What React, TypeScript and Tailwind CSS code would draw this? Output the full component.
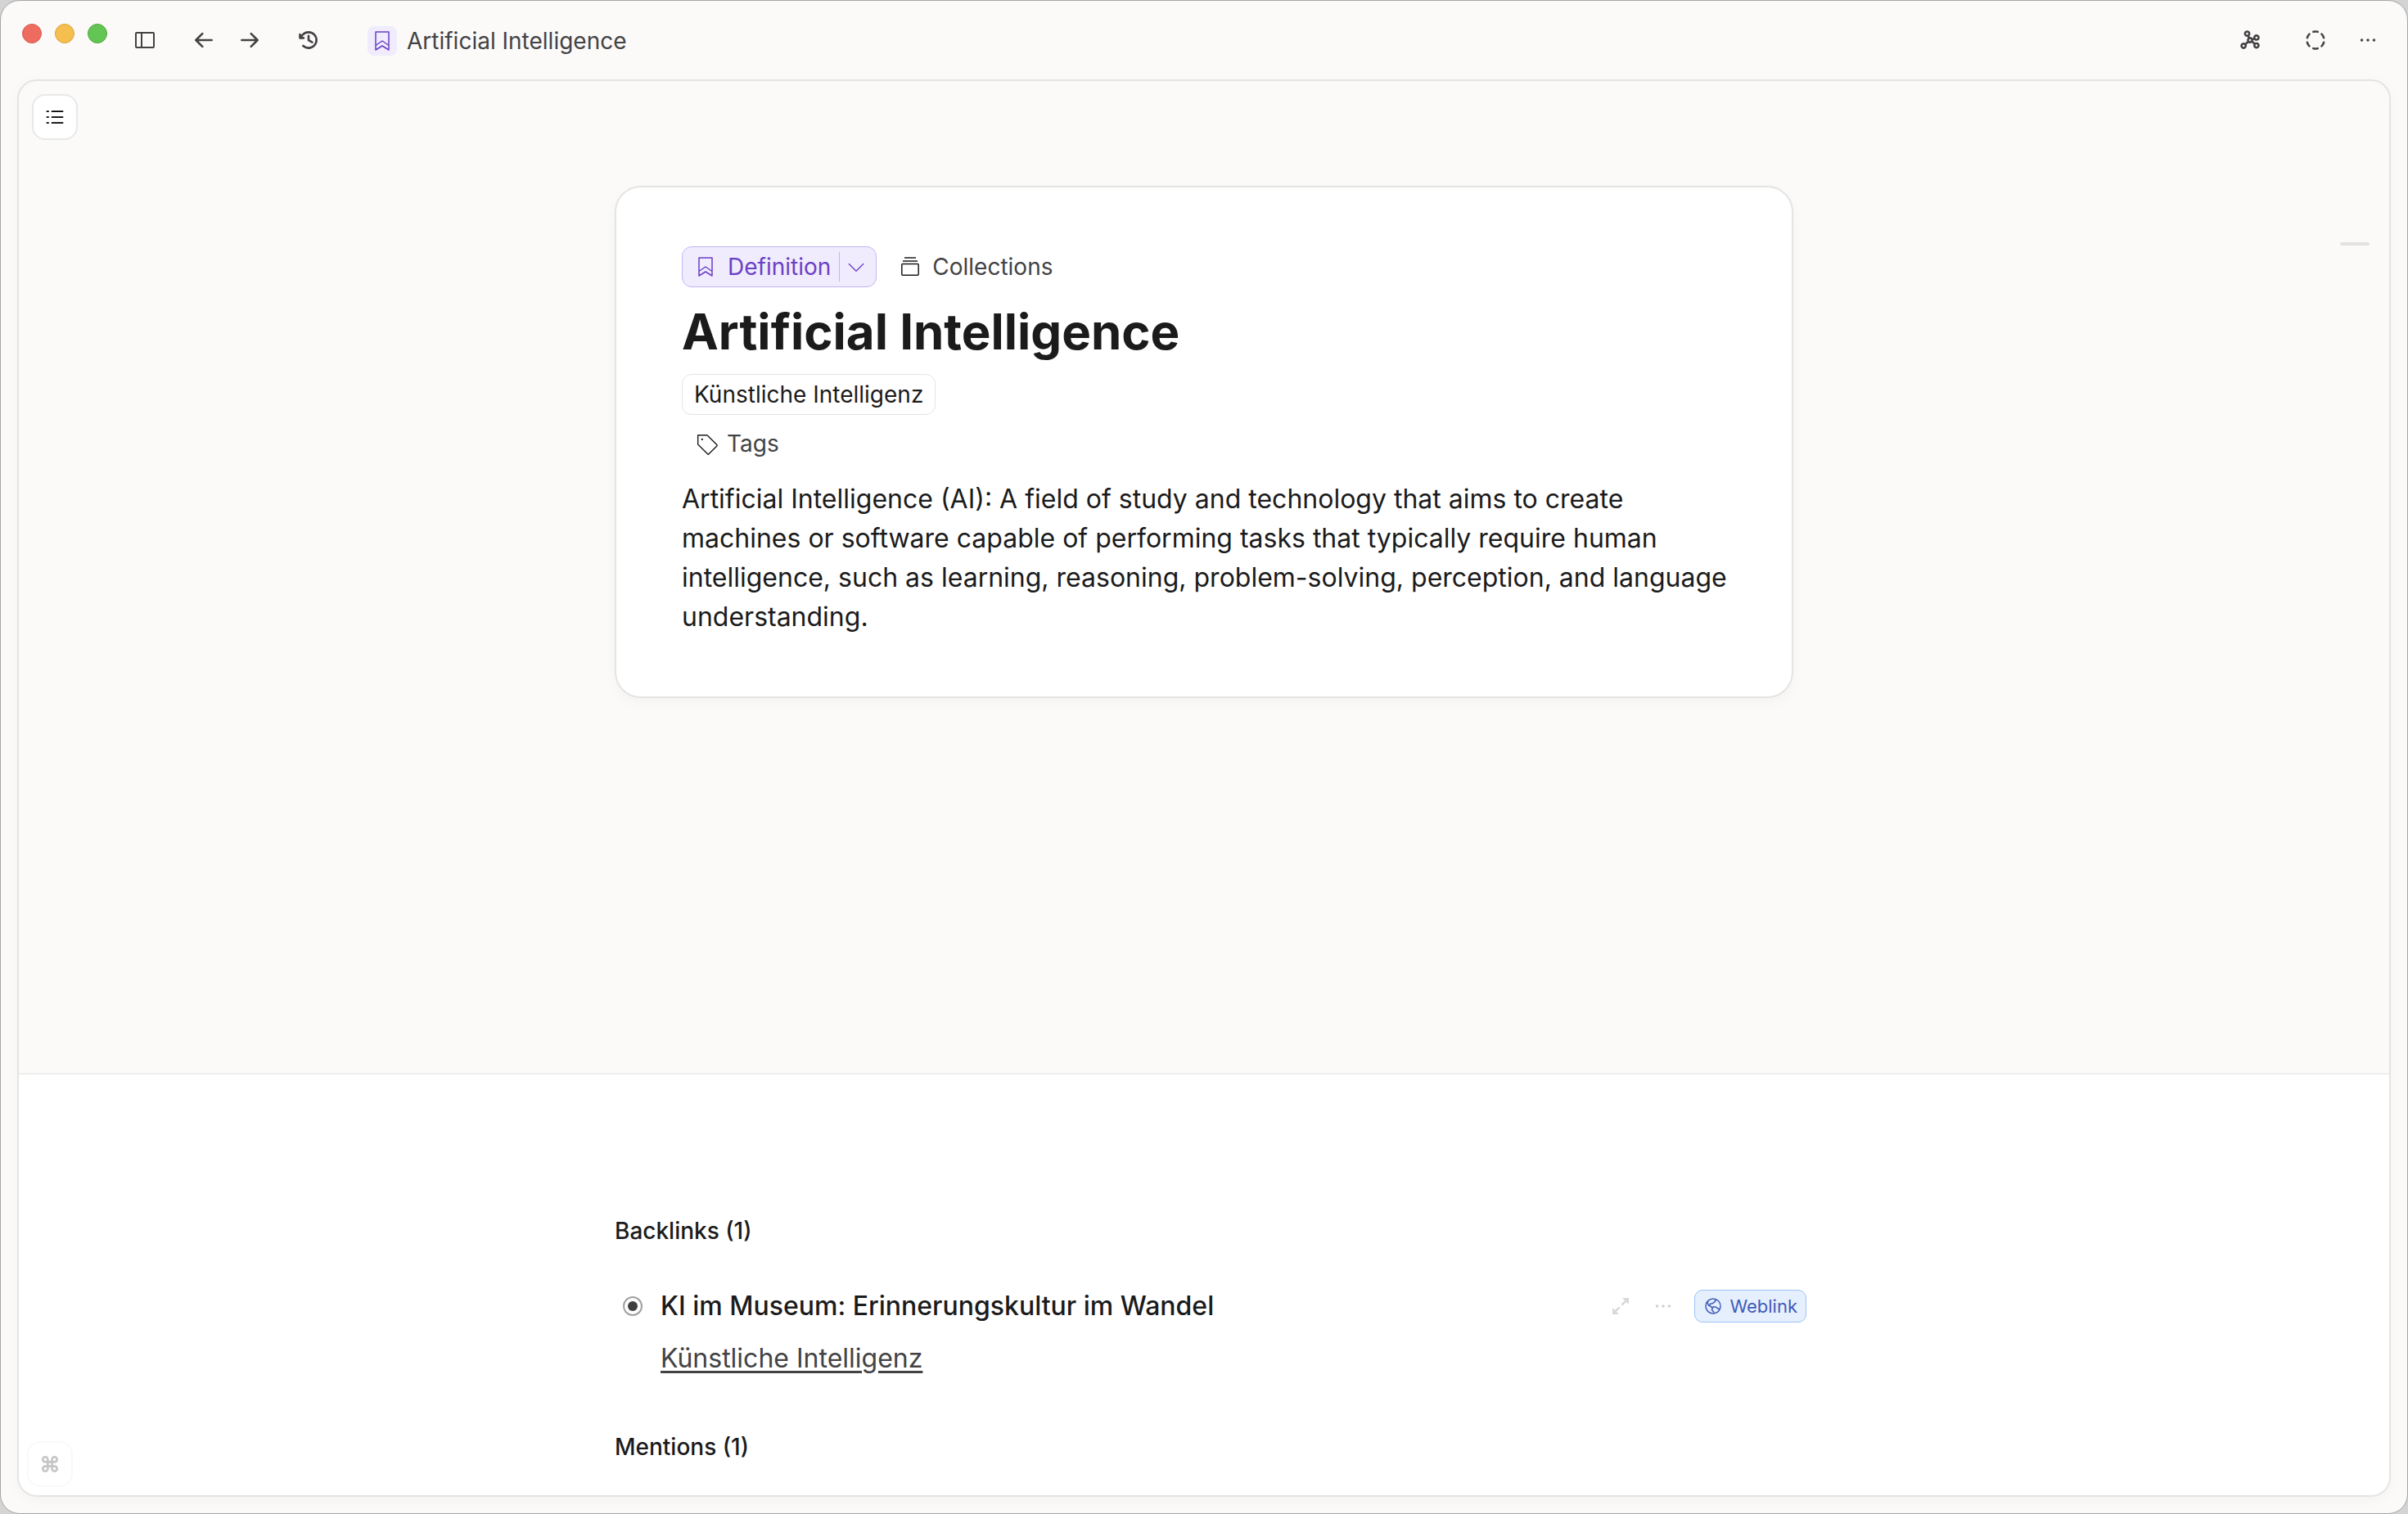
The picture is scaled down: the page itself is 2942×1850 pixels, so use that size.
import type { ReactNode } from "react";
import {
  PiArrowLeftBold,
  PiArrowRightBold,
  PiCaretDownLight,
  PiCircleDashedBold,
  PiClockCounterClockwiseBold,
  PiCommandBold,
  PiDotsThreeBold,
  PiGlobeHemisphereWest,
  PiGraphBold,
  PiListDashes,
  PiTagLight,
} from "react-icons/pi";

function ToolbarButton({ label, children }: { label: string; children: ReactNode }) {
  return (
    <button aria-label={label} className="grid size-10 place-items-center text-[28px] text-[#434345]">
      {children}
    </button>
  );
}

function BookmarkIcon({ className }: { className?: string }) {
  return (
    <svg viewBox="0 0 18 24" fill="none" stroke="currentColor" strokeLinejoin="round" className={className}>
      <path d="M1 1h16v22l-8-5-8 5V1Z" />
      <path d="M1 17.5l8-5.5 8 5.5" />
    </svg>
  );
}

function SidebarIcon() {
  return (
    <svg viewBox="0 0 24 20" fill="none" stroke="currentColor" strokeWidth="2" className="h-5 w-6">
      <rect x="1" y="1" width="22" height="18" rx="1" />
      <path d="M8 1v18" />
    </svg>
  );
}

function CollectionsIcon() {
  return (
    <svg viewBox="0 0 22 24" fill="none" stroke="currentColor" strokeWidth="1.500" className="h-6 w-[22px] text-[#1b1b1c]">
      <path d="M4 1h14M2 5h18" />
      <rect x="0.800" y="8.500" width="20.400" height="13.800" rx="1" />
    </svg>
  );
}

function ExpandIcon() {
  return (
    <svg viewBox="0 0 20 20" fill="none" stroke="currentColor" strokeWidth="2.500" strokeLinecap="round" className="size-5">
      <path d="M12 8l5-5M8 12l-5 5" />
      <path d="M12 0h8v8zM8 20H0v-8z" fill="currentColor" stroke="none" />
    </svg>
  );
}

function Backlink({ title, mention }: { title: string; mention: string }) {
  return (
    <article className="-mr-4">
      <div className="flex items-center pl-2.5">
        <input
          type="radio"
          defaultChecked
          aria-label={title}
          className="size-6 shrink-0 appearance-none rounded-full border-2 border-[#a0a0a1] bg-[#3f3f41] bg-clip-content p-1"
        />
        <h3 className="ml-[22px] flex-1 text-[32px] leading-12 font-medium">{title}</h3>
        <button aria-label="Expand" className="grid size-10 place-items-center text-[#d9d9d9]">
          <ExpandIcon />
        </button>
        <button aria-label="More" className="ml-3 grid size-10 place-items-center text-[28px] text-[#d0d0d0]">
          <PiDotsThreeBold />
        </button>
        <button className="ml-[18px] flex h-10 items-center gap-2 rounded-[10px] border border-[#9bc3f8] bg-[#e6effd] px-2.5 text-[22px] text-[#3f5bb8]">
          <PiGlobeHemisphereWest className="size-6" />
          Weblink
        </button>
      </div>
      <a
        href="#"
        className="mt-4 ml-14 inline-block text-[32px] leading-12 text-[#434345] underline decoration-[3px] underline-offset-4"
      >
        {mention}
      </a>
    </article>
  );
}

function Header() {
  return (
    <header className="flex h-24 shrink-0 items-center pr-7 pl-[26px]">
      <div className="flex gap-4 pb-4">
        <span className="size-6 rounded-full border border-[#d9594d] bg-[#ed6b5f]" />
        <span className="size-6 rounded-full border border-[#dda23a] bg-[#f5bf4f]" />
        <span className="size-6 rounded-full border border-[#4fa73e] bg-[#62c554]" />
      </div>
      <nav className="ml-[26px] flex items-center">
        <ToolbarButton label="Toggle sidebar">
          <SidebarIcon />
        </ToolbarButton>
        <div className="mx-8 flex gap-4">
          <ToolbarButton label="Back">
            <PiArrowLeftBold />
          </ToolbarButton>
          <ToolbarButton label="Forward">
            <PiArrowRightBold />
          </ToolbarButton>
        </div>
        <ToolbarButton label="History">
          <PiClockCounterClockwiseBold />
        </ToolbarButton>
      </nav>
      <button className="ml-[52px] flex items-center gap-3 pt-0.5 text-[28px] leading-10 text-[#434345]">
        <span className="grid size-9 place-items-center rounded-lg bg-[#f0ecfe] text-[#6b3fc4]">
          <BookmarkIcon className="h-6 w-[18px] stroke-[1.5]" />
        </span>
        Artificial Intelligence
      </button>
      <div className="ml-auto flex items-center">
        <ToolbarButton label="Graph">
          <PiGraphBold />
        </ToolbarButton>
        <div className="mr-6 ml-10 flex">
          <ToolbarButton label="Focus">
            <PiCircleDashedBold />
          </ToolbarButton>
        </div>
        <ToolbarButton label="More">
          <PiDotsThreeBold />
        </ToolbarButton>
      </div>
    </header>
  );
}

function NoteCard() {
  return (
    <article className="mx-auto max-w-[1440px] rounded-[32px] border-2 border-[#e4e4e3] bg-white pt-[72px] pr-[72px] pb-[73px] pl-20 shadow-[0_6px_16px_rgba(0,0,0,0.03)]">
      <div className="flex items-center gap-[30px] text-[28px] leading-10">
        <div className="flex h-[50px] items-center rounded-xl border border-[#c3b5f6] bg-[#f0ecfe] text-[#6b3fc4]">
          <button className="flex items-center gap-[18px] pr-2.5 pl-[19px]">
            <BookmarkIcon className="h-6 w-[18px] stroke-[1.5]" />
            Definition
          </button>
          <span className="h-9 w-px bg-[#c3b5f6]" />
          <button aria-label="Change type" className="pr-2.5 pl-1.5">
            <PiCaretDownLight className="size-7" />
          </button>
        </div>
        <button className="flex items-center gap-4 text-[#434345]">
          <CollectionsIcon />
          Collections
        </button>
      </div>
      <h1 className="pt-[18px] pb-4 text-[60px] leading-[72px] font-bold">Artificial Intelligence</h1>
      <div className="flex">
        <span className="rounded-xl border border-[#e4e4e3] px-3.5 py-1 text-[28px] leading-10">
          Künstliche Intelligenz
        </span>
      </div>
      <button className="mt-2.5 flex h-[50px] items-center gap-2.5 pl-[15px] text-[28px] text-[#434345]">
        <PiTagLight className="size-[30px] text-[#1b1b1c]" />
        Tags
      </button>
      <p className="mt-[19px] text-[32px] leading-12">
        Artificial Intelligence (AI): A field of study and technology that aims to create machines or software capable of
        performing tasks that typically require human intelligence, such as learning, reasoning, problem-solving,
        perception, and language understanding.
      </p>
    </article>
  );
}

export default function App() {
  return (
    <div className="h-screen bg-[#d4d4d4] font-[Inter,sans-serif] text-[#1b1b1c]">
      <div className="flex h-full flex-col overflow-hidden rounded-[24px] border border-[#a5a5a5] bg-[#fbfaf8]">
        <Header />
        <main className="relative mx-5 mb-5 flex flex-1 flex-col overflow-hidden rounded-[24px] border-2 border-[#e4e4e3] shadow-[0_4px_16px_rgba(0,0,0,0.03)]">
          <section className="flex-1 px-20 pt-32">
            <NoteCard />
          </section>

          <section className="border-t-2 border-[#eeeeed] bg-white px-20 pt-[171px] pb-[39px]">
            <div className="mx-auto max-w-[1440px]">
              <h2 className="mb-12 text-[28px] leading-10 font-medium">Backlinks (1)</h2>
              <Backlink title="KI im Museum: Erinnerungskultur im Wandel" mention="Künstliche Intelligenz" />
              <h2 className="mt-16 text-[28px] leading-10 font-medium">Mentions (1)</h2>
            </div>
          </section>

          <button
            aria-label="Table of contents"
            className="absolute top-4 left-4 grid size-14 place-items-center rounded-2xl border-2 border-[#e8e8e7] bg-white"
          >
            <PiListDashes className="size-7 text-black" />
          </button>
          <span className="absolute top-[197px] right-6 h-1 w-9 rounded-full bg-[#e2e2e1]" />
          <button
            aria-label="Shortcuts"
            className="absolute bottom-2.5 left-2.5 grid size-14 place-items-center rounded-2xl border-2 border-[#f9f9f9] text-[#c6c6c6]"
          >
            <PiCommandBold className="size-7" />
          </button>
        </main>
      </div>
    </div>
  );
}
